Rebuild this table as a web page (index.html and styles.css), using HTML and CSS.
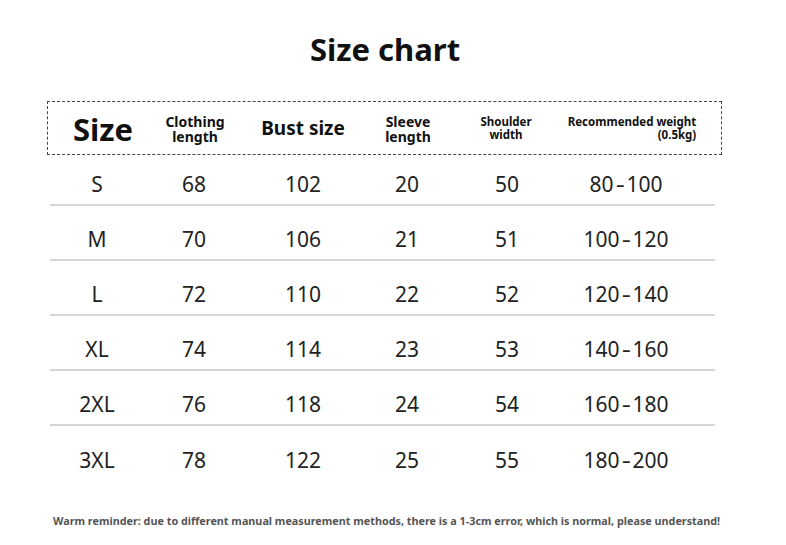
FILE: index.html
```html
<!DOCTYPE html>
<html lang="en">
<head>
<meta charset="utf-8">
<title>Size chart</title>
<link rel="stylesheet" href="styles.css">
</head>
<body>
<main class="page">
  <h1 class="title">Size chart</h1>
  <section class="chart">
    <div class="head">
      <div class="h-size">Size</div>
      <div class="h-mid">Clothing<br>length</div>
      <div class="h-big">Bust size</div>
      <div class="h-mid">Sleeve<br>length</div>
      <div class="h-small">Shoulder<br>width</div>
      <div class="h-small h-weight">Recommended weight<br>(0.5kg)</div>
    </div>
    <div class="rows">
      <div class="row"><span>S</span><span>68</span><span>102</span><span>20</span><span>50</span><span>80<span class="dash">-</span>100</span></div>
      <div class="row"><span>M</span><span>70</span><span>106</span><span>21</span><span>51</span><span>100<span class="dash">-</span>120</span></div>
      <div class="row"><span>L</span><span>72</span><span>110</span><span>22</span><span>52</span><span>120<span class="dash">-</span>140</span></div>
      <div class="row"><span>XL</span><span>74</span><span>114</span><span>23</span><span>53</span><span>140<span class="dash">-</span>160</span></div>
      <div class="row"><span>2XL</span><span>76</span><span>118</span><span>24</span><span>54</span><span>160<span class="dash">-</span>180</span></div>
      <div class="row"><span>3XL</span><span>78</span><span>122</span><span>25</span><span>55</span><span>180<span class="dash">-</span>200</span></div>
    </div>
  </section>
  <p class="note">Warm reminder: due to different manual measurement methods, there is a 1-3cm error, which is normal, please understand!</p>
</main>
</body>
</html>
```
FILE: styles.css
```css
* { box-sizing: border-box; }
html, body { margin: 0; padding: 0; background: #fff; }
body {
  font-family: "Noto Sans", "Open Sans", sans-serif;
  color: #222;
  width: 786px;
}
.page { padding-top: 29px; }
.title {
  margin: 0;
  padding-right: 16px;
  text-align: center;
  font-size: 31px;
  line-height: 40px;
  font-weight: 700;
  color: #111;
}
.chart {
  width: 675px;
  margin: 32px 0 0 47px;
}
.head, .row {
  display: grid;
  align-items: center;
  justify-items: center;
  text-align: center;
}
.head {
  grid-template-columns: 102px 82px 134px 76px 120px 132px;
  height: 54px;
  border: 1px dashed #444;
  padding-left: 4px;
  color: #111;
  font-weight: 700;
}
.h-size { font-size: 31px; line-height: 36px; padding-top: 2px; }
.h-big { font-size: 19px; line-height: 24px; }
.h-mid { font-size: 14px; line-height: 15px; padding-top: 1px; }
.h-small { font-size: 11.5px; line-height: 12.5px; padding-top: 1px; }
.h-weight { text-align: right; }
.rows { margin: 0 7px 0 3px; }
.row {
  grid-template-columns: 90px 104px 114px 94px 106px 132px;
  padding-left: 2px;
  height: 55px;
  padding-top: 12px;
  font-size: 21px;
  line-height: 28px;
  border-bottom: 2px solid #d6d6d6;
}
.row:first-child { height: 51px; padding-top: 8px; }
.row:last-child { border-bottom: none; }
.dash {
  display: inline-block;
  margin: 0 3px;
  transform: scaleX(1.35);
}
.note {
  margin: 33px 0 0 53px;
  font-size: 10.8px;
  line-height: 14px;
  font-weight: 700;
  color: #555;
}
```
